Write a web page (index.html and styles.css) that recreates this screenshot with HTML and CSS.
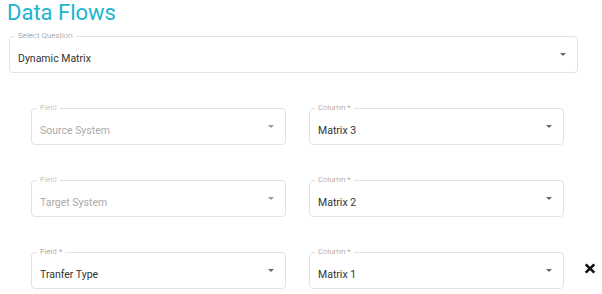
FILE: index.html
```html
<!DOCTYPE html>
<html>
<head>
<meta charset="utf-8" />
<title>Data Flows</title>
<link rel="stylesheet" href="styles.css">
</head>
<body>
<div class="page">
	<h1 class="page-title">Data Flows</h1>

	<fieldset class="select-box">
		<legend>Select Question</legend>
		<div class="select-value">
			<span class="text">Dynamic Matrix</span>
			<span class="caret"></span>
		</div>
	</fieldset>

	<div class="mapping-grid">
		<fieldset class="select-box disabled">
			<legend>Field</legend>
			<div class="select-value">
				<span class="text">Source System</span>
				<span class="caret"></span>
			</div>
		</fieldset>
		<fieldset class="select-box">
			<legend>Column *</legend>
			<div class="select-value">
				<span class="text">Matrix 3</span>
				<span class="caret"></span>
			</div>
		</fieldset>
		<div class="row-action"></div>

		<fieldset class="select-box disabled">
			<legend>Field</legend>
			<div class="select-value">
				<span class="text">Target System</span>
				<span class="caret"></span>
			</div>
		</fieldset>
		<fieldset class="select-box">
			<legend>Column *</legend>
			<div class="select-value">
				<span class="text">Matrix 2</span>
				<span class="caret"></span>
			</div>
		</fieldset>
		<div class="row-action"></div>

		<fieldset class="select-box">
			<legend>Field *</legend>
			<div class="select-value">
				<span class="text">Tranfer Type</span>
				<span class="caret"></span>
			</div>
		</fieldset>
		<fieldset class="select-box">
			<legend>Column *</legend>
			<div class="select-value">
				<span class="text">Matrix 1</span>
				<span class="caret"></span>
			</div>
		</fieldset>
		<div class="row-action">
			<svg class="remove-icon" width="12" height="11" viewBox="0 0 12 11">
				<path d="M0.8 2.3 L2.6 0.6 L6 3.7 L9.4 0.6 L11.2 2.3 L7.9 5.5 L11.2 8.7 L9.4 10.4 L6 7.3 L2.6 10.4 L0.8 8.7 L4.1 5.5 Z" fill="#111"/>
			</svg>
		</div>
	</div>
</div>
</body>
</html>
```

FILE: styles.css
```css
html, body{
	margin: 0;
	padding: 0;
	background: #fff;
}
body{
	font-family: Roboto, "Liberation Sans", Arial, sans-serif;
	color: #333;
}
.page{
	padding: 0 24px 0 9px;
}
.page-title{
	margin: 0 0 5px -2px;
	font-size: 22px;
	line-height: 26px;
	font-weight: 400;
	color: #1bb5d0;
}
.select-box{
	margin: 0;
	padding: 0 8px 5px;
	min-width: 0;
	border: 1px solid #e2e2e2;
	border-radius: 4px;
	height: 42px;
	box-sizing: border-box;
}
.select-box legend{
	margin-left: -3px;
	padding: 0 3px;
	font-size: 8px;
	line-height: 10px;
	font-weight: 300;
	color: #8a8a8a;
}
.select-value{
	display: flex;
	align-items: center;
	justify-content: space-between;
	margin-top: 10px;
	height: 16px;
	font-size: 10.5px;
	line-height: 16px;
}
.caret{
	width: 0;
	height: 0;
	margin: 0 3px 9px 0;
	border-left: 3px solid transparent;
	border-right: 3px solid transparent;
	border-top: 3px solid #666;
}
.select-box.disabled legend{
	color: #b3b3b3;
}
.select-box.disabled .text{
	color: #aaa;
}
.select-box.disabled .caret{
	border-top-color: #999;
}
.mapping-grid{
	display: grid;
	grid-template-columns: 255px 255px 12px;
	grid-auto-rows: 42px;
	column-gap: 23px;
	row-gap: 30px;
	margin: 30px 0 0 22px;
}
.row-action{
	display: flex;
	align-items: center;
}
.remove-icon{
	display: block;
	margin: 1px 0 0 -3px;
}
```
